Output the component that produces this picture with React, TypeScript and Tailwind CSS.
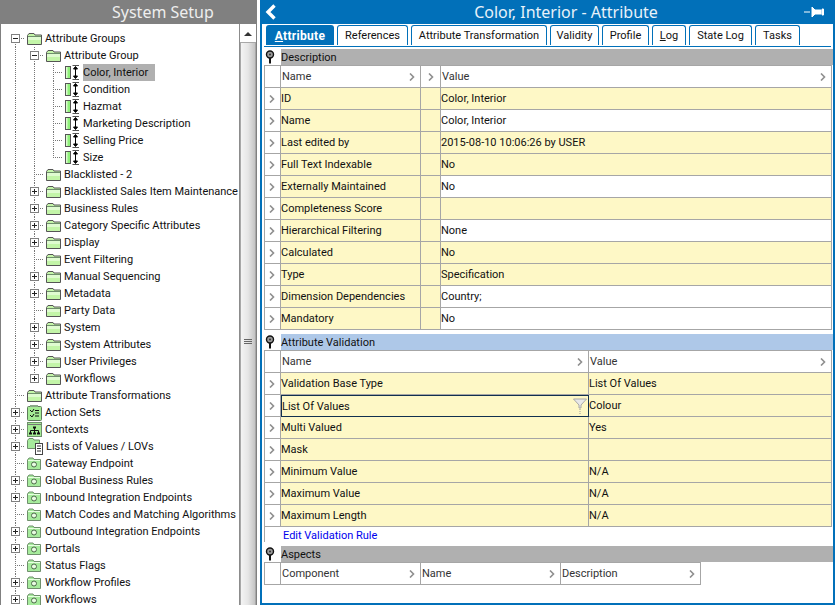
import { ReactNode } from "react";

type NodeIcon = "folder" | "gear" | "attr" | "actions" | "contexts" | "lov";

interface TreeNode {
  label: string;
  depth: number;
  toggle?: "+" | "-";
  icon: NodeIcon;
  last?: boolean;
  first?: boolean;
  selected?: boolean;
}

const treeNodes: TreeNode[] = [
  { label: "Attribute Groups", depth: 0, toggle: "-", icon: "folder", first: true },
  { label: "Attribute Group", depth: 1, toggle: "-", icon: "folder" },
  { label: "Color, Interior", depth: 2, icon: "attr", selected: true },
  { label: "Condition", depth: 2, icon: "attr" },
  { label: "Hazmat", depth: 2, icon: "attr" },
  { label: "Marketing Description", depth: 2, icon: "attr" },
  { label: "Selling Price", depth: 2, icon: "attr" },
  { label: "Size", depth: 2, icon: "attr", last: true },
  { label: "Blacklisted - 2", depth: 1, icon: "folder" },
  { label: "Blacklisted Sales Item Maintenance", depth: 1, toggle: "+", icon: "folder" },
  { label: "Business Rules", depth: 1, toggle: "+", icon: "folder" },
  { label: "Category Specific Attributes", depth: 1, toggle: "+", icon: "folder" },
  { label: "Display", depth: 1, toggle: "+", icon: "folder" },
  { label: "Event Filtering", depth: 1, icon: "folder" },
  { label: "Manual Sequencing", depth: 1, toggle: "+", icon: "folder" },
  { label: "Metadata", depth: 1, toggle: "+", icon: "folder" },
  { label: "Party Data", depth: 1, icon: "folder" },
  { label: "System", depth: 1, toggle: "+", icon: "folder" },
  { label: "System Attributes", depth: 1, toggle: "+", icon: "folder" },
  { label: "User Privileges", depth: 1, toggle: "+", icon: "folder" },
  { label: "Workflows", depth: 1, toggle: "+", icon: "folder", last: true },
  { label: "Attribute Transformations", depth: 0, icon: "folder" },
  { label: "Action Sets", depth: 0, toggle: "+", icon: "actions" },
  { label: "Contexts", depth: 0, toggle: "+", icon: "contexts" },
  { label: "Lists of Values / LOVs", depth: 0, toggle: "+", icon: "lov" },
  { label: "Gateway Endpoint", depth: 0, icon: "gear" },
  { label: "Global Business Rules", depth: 0, toggle: "+", icon: "gear" },
  { label: "Inbound Integration Endpoints", depth: 0, toggle: "+", icon: "gear" },
  { label: "Match Codes and Matching Algorithms", depth: 0, icon: "gear" },
  { label: "Outbound Integration Endpoints", depth: 0, toggle: "+", icon: "gear" },
  { label: "Portals", depth: 0, toggle: "+", icon: "gear" },
  { label: "Status Flags", depth: 0, icon: "gear" },
  { label: "Workflow Profiles", depth: 0, toggle: "+", icon: "gear" },
  { label: "Workflows", depth: 0, toggle: "+", icon: "gear" },
];

const tabs = [
  { label: "References", width: "w-[71px]" },
  { label: "Attribute Transformation", width: "w-[136px]" },
  { label: "Validity", width: "w-[49px]" },
  { label: "Profile", width: "w-[47px]" },
  { label: "Log", width: "w-[34px]", underlineFirst: true },
  { label: "State Log", width: "w-[63px]" },
  { label: "Tasks", width: "w-[45px]" },
];

const descriptionRows = [
  { name: "ID", value: "Color, Interior", filled: true },
  { name: "Name", value: "Color, Interior" },
  { name: "Last edited by", value: "2015-08-10 10:06:26 by USER", filled: true },
  { name: "Full Text Indexable", value: "No", filled: true },
  { name: "Externally Maintained", value: "No" },
  { name: "Completeness Score", value: "", filled: true },
  { name: "Hierarchical Filtering", value: "None" },
  { name: "Calculated", value: "No", filled: true },
  { name: "Type", value: "Specification", filled: true },
  { name: "Dimension Dependencies", value: "Country;" },
  { name: "Mandatory", value: "No" },
];

const validationRows = [
  { name: "Validation Base Type", value: "List Of Values" },
  { name: "List Of Values", value: "Colour", focused: true },
  { name: "Multi Valued", value: "Yes" },
  { name: "Mask", value: "" },
  { name: "Minimum Value", value: "N/A" },
  { name: "Maximum Value", value: "N/A" },
  { name: "Maximum Length", value: "N/A" },
];

function Chevron() {
  return (
    <svg width="6" height="8" viewBox="0 0 6 8" className="shrink-0">
      <path d="M1 0.5 L4.5 4 L1 7.5" fill="none" stroke="#8f8f8f" strokeWidth="1.6" />
    </svg>
  );
}

function PinGlyph() {
  return (
    <svg width="10" height="14" viewBox="0 0 10 14">
      <circle cx="5" cy="4.5" r="3.5" fill="#9a9a9a" stroke="#111" strokeWidth="1.4" />
      <circle cx="5" cy="4.5" r="1" fill="#333" />
      <path d="M5 8 V13.5" stroke="#111" strokeWidth="2" />
    </svg>
  );
}

function GuideCell({ kind, toggle, first, last }: { kind: "line" | "node"; toggle?: "+" | "-"; first?: boolean; last?: boolean }) {
  return (
    <svg width="19" height="17" viewBox="0 0 19 17" className="shrink-0">
      {kind === "line" ? (
        <path d="M9.5 0 V17" stroke="#777" strokeDasharray="1 1" />
      ) : (
        <>
          <path d={`M9.5 ${first ? 8 : 0} V${last ? 8 : 17}`} stroke="#777" strokeDasharray="1 1" />
          <path d="M9 8.5 H20" stroke="#777" strokeDasharray="1 1" />
          {toggle && (
            <>
              <rect x="5.5" y="4.5" width="8" height="8" fill="#fff" stroke="#808080" />
              <path d="M7 8.5 H12" stroke="#222" />
              {toggle === "+" && <path d="M9.5 6 V11" stroke="#222" />}
            </>
          )}
        </>
      )}
    </svg>
  );
}

function TreeIcon({ icon }: { icon: NodeIcon }) {
  if (icon === "attr") {
    return (
      <svg width="15" height="15" viewBox="0 0 15 15" className="shrink-0">
        <rect x="0.5" y="1.5" width="5" height="12" fill="#8ff07a" stroke="#555" />
        <rect x="1" y="2" width="1.5" height="11" fill="#dcfbd0" />
        <path d="M7.5 0.5 H14 M7.5 14.5 H14" stroke="#555" />
        <path d="M10.5 2 V13 M8.5 4 L10.5 1.5 L12.5 4 Z M8.5 11 L10.5 13.5 L12.5 11 Z" stroke="#000" fill="#000" strokeWidth="1" />
      </svg>
    );
  }
  if (icon === "gear") {
    return (
      <svg width="15" height="13" viewBox="0 0 15 13" className="shrink-0">
        <path d="M0.5 3 L2 1 H6 L7 2.5 H13.5 V12.5 H0.5 Z" fill="#a6eb9c" stroke="#6f8f6c" />
        <path d="M1 3.5 H13" stroke="#e6ffe0" />
        <circle cx="7" cy="7.5" r="2.5" fill="#e8fbe2" stroke="#4d6b4a" />
      </svg>
    );
  }
  if (icon === "actions") {
    return (
      <svg width="15" height="16" viewBox="0 0 15 16" className="shrink-0">
        <rect x="0.5" y="1.5" width="14" height="14" rx="1" fill="#a4ec94" stroke="#5f7a5c" />
        <rect x="3" y="0" width="8" height="2" fill="#8aa888" />
        <path d="M3 5 L5 7 L7 4 M3 10 L5 12 L7 9 M8 5.5 H12 M8 8 H12 M8 11 H12" stroke="#111" fill="none" />
      </svg>
    );
  }
  if (icon === "contexts") {
    return (
      <svg width="15" height="15" viewBox="0 0 15 15" className="shrink-0">
        <rect x="0.5" y="0.5" width="14" height="14" fill="#a4ec94" stroke="#6f8f6c" />
        <path d="M1 2.5 H14" stroke="#777" />
        <path d="M7.5 6 V8.5 M3.5 11 V8.5 H11.5 V11 M7.5 8.5 V11" stroke="#111" fill="none" />
        <path d="M6 4.5 H9 V6.5 H6 Z M2 10.5 H5 V12.5 H2 Z M6 10.5 H9 V12.5 H6 Z M10 10.5 H13 V12.5 H10 Z" fill="#111" />
      </svg>
    );
  }
  if (icon === "lov") {
    return (
      <svg width="16" height="17" viewBox="0 0 16 17" className="shrink-0">
        <path d="M0.5 2.5 L2 0.5 H6 L7 2 H12.5 V10.5 H0.5 Z" fill="#a6eb9c" stroke="#6f8f6c" />
        <rect x="8.5" y="5.5" width="7" height="11" fill="#fff" stroke="#444" />
        <path d="M10 8 H14 M10 10.5 H14 M10 13 H14" stroke="#333" />
      </svg>
    );
  }
  return (
    <svg width="15" height="12" viewBox="0 0 15 12" className="shrink-0">
      <path d="M0.5 2.5 L2 0.5 H7 L8 2 H14.5 V11.5 H0.5 Z" fill="#c3f5a8" stroke="#555" />
      <path d="M1 3.5 H14" stroke="#6f8f6c" />
      <rect x="1" y="4" width="13" height="3" fill="#dffbd0" />
    </svg>
  );
}

function TreeRow({ node }: { node: TreeNode }) {
  return (
    <div className="flex h-[17px] items-center">
      {Array.from({ length: node.depth }, (_, i) => (
        <GuideCell key={i} kind="line" />
      ))}
      <GuideCell kind="node" toggle={node.toggle} first={node.first} last={node.last} />
      <div className="ml-[2px]">
        <TreeIcon icon={node.icon} />
      </div>
      <span className={`ml-[3px] h-[17px] whitespace-nowrap leading-[17px] ${node.selected ? "bg-[#b0b0b0] pr-[7px]" : "pr-[3px]"}`}>
        {node.label}
      </span>
    </div>
  );
}

function Scrollbar() {
  return (
    <div className="flex w-[17px] shrink-0 flex-col border-l border-[#8c8c8c] pt-px">
      <div className="flex h-[17px] items-center justify-center">
        <div className="h-0 w-0 border-x-[4px] border-b-[4px] border-x-transparent border-b-[#333]" />
      </div>
      <div className="flex flex-1 flex-col items-center border-x border-t border-[#a8a8a8] bg-gradient-to-r from-[#f4f4f4] via-[#e6e6e6] to-[#c4c4c4] pt-[296px]">
        <div className="flex w-[8px] flex-col gap-px">
          <div className="h-px bg-[#666]" />
          <div className="h-px bg-[#666]" />
          <div className="h-px bg-[#666]" />
        </div>
      </div>
    </div>
  );
}

function SectionBar({ title, color }: { title: string; color: string }) {
  return (
    <div className="flex h-[16px] items-center">
      <div className="flex w-[17px] shrink-0 justify-center pr-[5px]">
        <PinGlyph />
      </div>
      <div className={`h-[16px] flex-1 leading-[18px] ${color}`}>{title}</div>
    </div>
  );
}

function HeadCell({ children, width }: { children?: ReactNode; width: string }) {
  return (
    <div className={`flex h-full items-center justify-between border-r border-[#a6a6a6] pl-px pr-[5px] text-[#333] ${width}`}>
      <span className="pt-[2px]">{children}</span>
      <Chevron />
    </div>
  );
}

function RowArrow() {
  return (
    <div className="flex h-full w-[16px] shrink-0 items-center justify-center border-r border-[#a6a6a6] bg-white pr-px">
      <Chevron />
    </div>
  );
}

function Filter() {
  return (
    <svg width="14" height="16" viewBox="0 0 14 16" className="shrink-0">
      <path d="M0.5 1 H13.5 L8 7 V10 H6 V7 Z" fill="#e8e8e8" stroke="#a8a8a8" />
      <path d="M7 11 V16" stroke="#999" strokeDasharray="1 1" />
    </svg>
  );
}

export default function App() {
  return (
    <div className="flex h-[605px] w-[835px] overflow-hidden bg-white font-[family-name:Roboto,sans-serif] text-[11px] text-[#111]">
      {/* Left pane */}
      <div className="flex h-full w-[257px] shrink-0 flex-col border-x border-[#808080]">
        <div className="h-[24px] shrink-0 bg-[#808080] pl-[111px] font-[family-name:Noto_Sans,sans-serif] text-[16px] leading-[24px] text-[#eeeeee]">System Setup</div>
        <div className="flex min-h-0 flex-1">
          <div className="flex-1 overflow-hidden pl-[5px] pt-[6px]">
            {treeNodes.map((node, i) => (
              <TreeRow key={i} node={node} />
            ))}
          </div>
          <Scrollbar />
        </div>
      </div>

      {/* Right pane */}
      <div className="ml-[3px] flex h-full w-[575px] shrink-0 flex-col border-x-2 border-b-2 border-[#0170b9]">
        <div className="relative flex h-[24px] shrink-0 items-center justify-center bg-[#0170b9] pl-[37px] font-[family-name:Noto_Sans,sans-serif] text-[16px] text-[#e8f2fa]">
          <svg width="12" height="16" viewBox="0 0 12 16" className="absolute left-[3px] top-[4px]">
            <path d="M9.5 1.5 L3 8 L9.5 14.5" fill="none" stroke="#fff" strokeWidth="3.4" />
          </svg>
          <span>Color, Interior - Attribute</span>
          <svg width="20" height="12" viewBox="0 0 20 12" className="absolute right-[9px] top-[6px]">
            <path d="M0 6 H6 M8 1 V11 L11 8 H17 V4 H11 Z M18 3 H19.5 V9 H18 Z" fill="#fff" stroke="#fff" strokeWidth="1" />
          </svg>
        </div>

        <div className="mx-[2px] flex h-[23px] shrink-0 items-start gap-[3px] border-b border-[#0170b9] pl-[2px] pt-px">
          <div className="flex h-[20px] w-[68px] items-center justify-center rounded-t-[3px] bg-[#0170b9] pt-px text-[12px] font-bold tracking-[0.3px] text-white">
            <span><span className="underline">A</span>ttribute</span>
          </div>
          {tabs.map((tab) => (
            <div key={tab.label} className={`flex h-[20px] items-center justify-center rounded-t-[3px] border-x border-t border-[#0170b9] pt-[2px] ${tab.width}`}>
              {tab.underlineFirst ? <span><span className="underline">L</span>og</span> : tab.label}
            </div>
          ))}
        </div>

        <div className="flex min-h-0 flex-1 flex-col pl-[2px] pt-[2px]">
          <SectionBar title="Description" color="bg-[#b0b0b0]" />
          <div className="mr-px border-l border-t border-[#a6a6a6]">
            <div className="flex h-[22px] border-b border-[#a6a6a6]">
              <div className="h-full w-[16px] shrink-0 border-r border-[#a6a6a6]" />
              <HeadCell width="w-[140px]">Name</HeadCell>
              <div className="flex h-full w-[20px] items-center justify-center border-r border-[#a6a6a6]">
                <Chevron />
              </div>
              <div className="flex h-full flex-1 items-center justify-between border-r border-[#a6a6a6] pl-px pr-[5px] text-[#333]">
                <span className="pt-[2px]">Value</span>
                <Chevron />
              </div>
            </div>
            {descriptionRows.map((row) => (
              <div key={row.name} className="flex h-[22px] border-b border-[#a6a6a6]">
                <RowArrow />
                <div className="flex h-full w-[140px] items-center border-r border-[#a6a6a6] bg-[#fef8c6] pt-[2px]">{row.name}</div>
                <div className="h-full w-[20px] border-r border-[#a6a6a6] bg-[#fef8c6]" />
                <div className={`flex h-full flex-1 items-center border-r border-[#a6a6a6] pt-[2px] ${row.filled ? "bg-[#fef8c6]" : "bg-white"}`}>{row.value}</div>
              </div>
            ))}
          </div>

          <div className="mt-[4px]">
            <SectionBar title="Attribute Validation" color="bg-[#aec8e8]" />
          </div>
          <div className="mr-px border-l border-t border-[#a6a6a6]">
            <div className="flex h-[22px] border-b border-[#a6a6a6]">
              <div className="h-full w-[16px] shrink-0 border-r border-[#a6a6a6]" />
              <HeadCell width="w-[308px]">Name</HeadCell>
              <div className="flex h-full flex-1 items-center justify-between border-r border-[#a6a6a6] pl-px pr-[5px] text-[#333]">
                <span className="pt-[2px]">Value</span>
                <Chevron />
              </div>
            </div>
            {validationRows.map((row) => (
              <div key={row.name} className="flex h-[22px] border-b border-[#a6a6a6]">
                <RowArrow />
                {row.focused ? (
                  <div className="flex h-[22px] w-[308px] items-center justify-between border border-[#12304f] bg-[#fef8c6] pr-px">
                    <span className="pt-[2px]">{row.name}</span>
                    <Filter />
                  </div>
                ) : (
                  <div className="flex h-full w-[308px] items-center border-r border-[#a6a6a6] bg-[#fef8c6] pt-[2px]">{row.name}</div>
                )}
                <div className="flex h-full flex-1 items-center border-r border-[#a6a6a6] bg-[#fef8c6] pt-[2px]">{row.value}</div>
              </div>
            ))}
            <div className="h-[15px] pl-[18px] leading-[17px] text-[#0000ee]">Edit Validation Rule</div>
          </div>

          <div className="mt-[4px]">
            <SectionBar title="Aspects" color="bg-[#b0b0b0]" />
          </div>
          <div className="flex h-[23px] w-[437px] border border-[#a6a6a6] border-r-0">
            <div className="h-full w-[16px] shrink-0 border-r border-[#a6a6a6]" />
            <HeadCell width="w-[140px]">Component</HeadCell>
            <HeadCell width="w-[140px]">Name</HeadCell>
            <HeadCell width="w-[140px]">Description</HeadCell>
          </div>
        </div>
      </div>
    </div>
  );
}
